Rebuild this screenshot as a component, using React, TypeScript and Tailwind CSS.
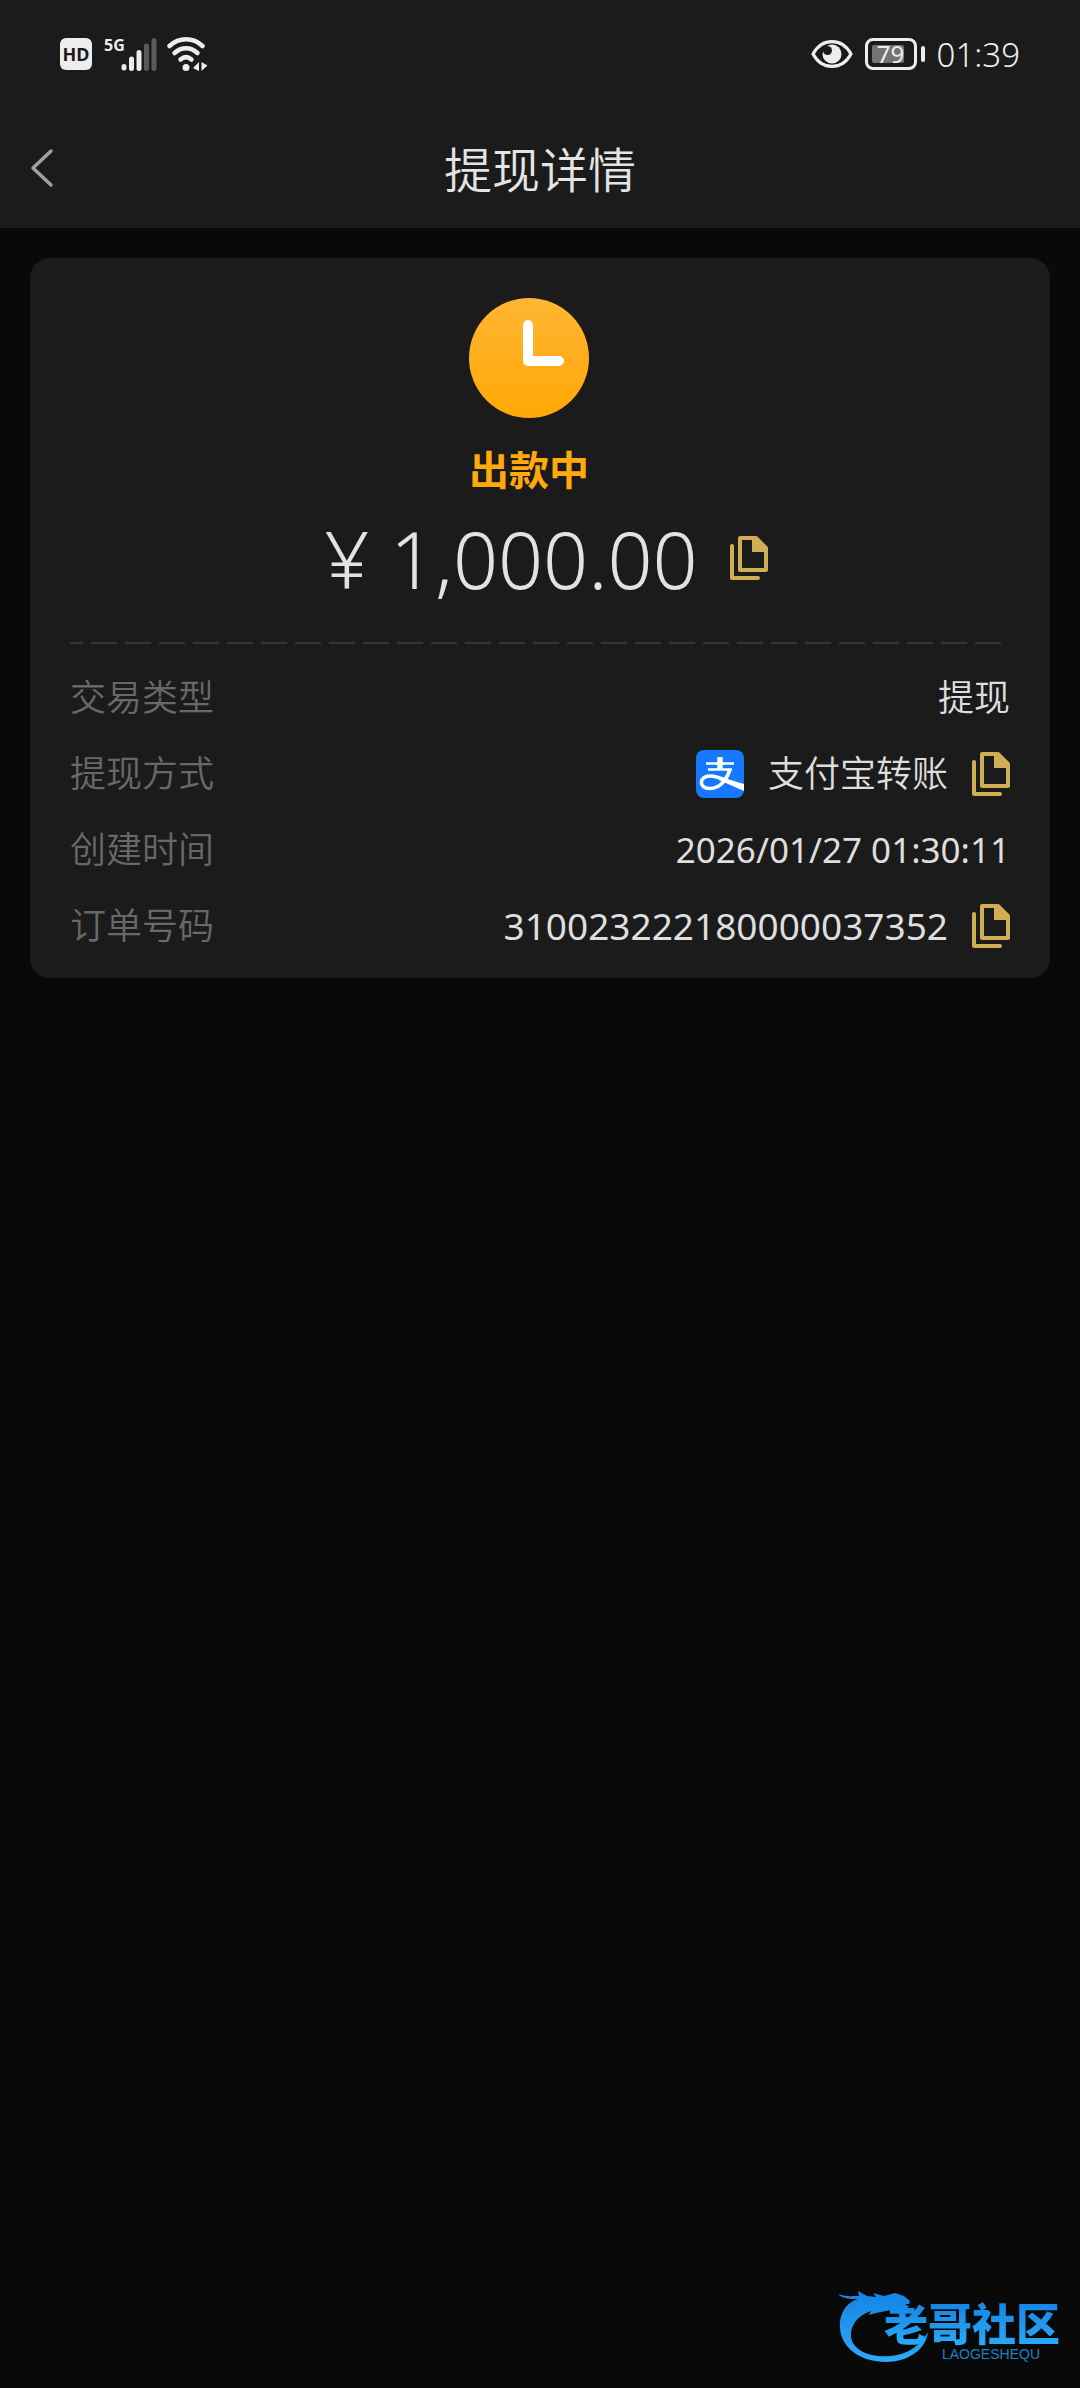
import { useState } from 'react';

interface IDetail {
  label: string;
  value: string;
  valueClass: string;
  copyable?: boolean;
  alipay?: boolean;
}

const details: IDetail[] = [
  { label: '交易类型', value: '提现', valueClass: 'text-4xl font-[350]' },
  { label: '提现方式', value: '支付宝转账', valueClass: 'text-4xl font-[350]', copyable: true, alipay: true },
  { label: '创建时间', value: '2026/01/27 01:30:11', valueClass: 'text-[35px] font-normal' },
  { label: '订单号码', value: '310023222180000037352', valueClass: 'text-[37px] font-normal', copyable: true },
];

function SignalIcon() {
  return (
    <svg width="36" height="35" viewBox="0 0 36 35" strokeWidth="5" strokeLinecap="round" stroke="#ededed">
      <path d="M3 29.5V31M10.5 22V31.5M18 15.5V31.5" />
      <path d="M25.5 9V31.5M33 3.5V31.5" stroke="#5a5a5a" />
    </svg>
  );
}

function WifiIcon() {
  return (
    <svg width="41" height="35" viewBox="0 0 41 35" fill="none" stroke="#ededed" strokeWidth="4.5" strokeLinecap="round">
      <path d="M2.5 9C12 0 26 0 35.5 9" />
      <path d="M7.5 16C14.5 9.5 23.5 9.5 30.5 16" />
      <path d="M13.5 22.5C17 19.5 21 19.5 24.5 22.5" />
      <circle cx="19" cy="30.5" r="3.5" fill="#ededed" stroke="none" />
      <path d="M32 25V34L26 31ZM34.5 25L40.5 28.5L34.5 34Z" fill="#ededed" stroke="none" />
    </svg>
  );
}

function EyeIcon() {
  return (
    <svg width="42" height="30" viewBox="0 0 42 30" fill="none">
      <path d="M2 15C11 -1.5 31 -1.5 40 15C31 31.5 11 31.5 2 15Z" stroke="#ededed" strokeWidth="3.2" strokeLinejoin="round" />
      <circle cx="21" cy="15" r="9.5" fill="#ededed" />
      <circle cx="16.5" cy="11.5" r="4.5" fill="#1b1b1b" />
    </svg>
  );
}

function StatusBar() {
  return (
    <div className="flex h-27 items-center justify-between px-15 text-[#ededed]">
      <div className="flex items-center">
        <span className="flex size-8 items-center justify-center rounded-md bg-[#ededed] text-lg leading-none font-bold text-[#1b1b1b]">
          HD
        </span>
        <span className="ml-3 -mr-1 self-start text-base leading-4 font-bold">5G</span>
        <SignalIcon />
        <span className="ml-2.5">
          <WifiIcon />
        </span>
      </div>
      <div className="flex items-center">
        <EyeIcon />
        <span className="relative ml-3 flex h-8 w-13 items-center justify-center rounded-lg border-3 border-[#ededed] text-2xl leading-none">
          <span className="absolute top-1 left-1 h-[18px] w-8 rounded-xs bg-[#737373]" />
          <span className="relative">79</span>
        </span>
        <span className="ml-1 h-4 w-1 rounded-sm bg-[#ededed]" />
        <span className="ml-3 text-[33px] leading-none font-light">01:39</span>
      </div>
    </div>
  );
}

function AlipayLogo() {
  return (
    <svg width="48" height="48" viewBox="0 0 48 48" className="rounded-lg">
      <rect width="48" height="48" fill="#1677ff" />
      <g fill="none" stroke="#fff">
        <path d="M10 13.5H38M12 19.5H36" strokeWidth="2.6" />
        <path d="M24 7V20" strokeWidth="5.5" />
        <path d="M34 19C31.5 28 25 38.5 14 38.5C2 38.5 3 26 14 26C20 26 26 28.5 32 31" strokeWidth="3.6" />
      </g>
      <path d="M23 26.5L48 34V41L23 30Z" fill="#fff" />
    </svg>
  );
}

function CopyButton({ text }: { text: string }) {
  const [copied, setCopied] = useState(false);

  const onClick = () => {
    navigator.clipboard?.writeText(text);
    setCopied(true);
  };

  return (
    <button type="button" aria-label={copied ? '已复制' : '复制'} className="cursor-pointer" onClick={onClick}>
      <svg width="38" height="44" viewBox="0 0 38 44" fill="none" stroke="#cfae54" strokeWidth="4">
        <path d="M2 10V42H28" strokeLinecap="round" strokeLinejoin="round" />
        <path d="M10 2H26L36 12V34H10Z" strokeLinejoin="round" />
        <path d="M22 1H27L37 11V16H22Z" fill="#cfae54" stroke="none" />
      </svg>
    </button>
  );
}

function DetailRow({ detail }: { detail: IDetail }) {
  return (
    <div className="flex h-19 items-center justify-between">
      <dt className="text-4xl font-[350] text-[#686868]">{detail.label}</dt>
      <dd className="flex items-center gap-6 text-[#dedede]">
        {detail.alipay && <AlipayLogo />}
        <span className={detail.valueClass}>{detail.value}</span>
        {detail.copyable && <CopyButton text={detail.value} />}
      </dd>
    </div>
  );
}

function CommunityMark() {
  return (
    <footer className="relative mr-5 mb-6 h-20 w-[222px] self-end">
      <svg width="222" height="80" viewBox="0 0 222 80" fill="none">
        <defs>
          <linearGradient id="mark" x1="0" y1="0" x2="0" y2="1">
            <stop offset="0" stopColor="#1483e4" />
            <stop offset="1" stopColor="#2cabf8" />
          </linearGradient>
        </defs>
        <path
          d="M0 10C8 13 14 12 21 12L20 7L29 12L38 13L35 9L46 12L57 9L66 12L72 17L71 20L64 20L71 22L68 26L58 25L48 27L38 29L31 31L33 27C18 32 12 43 13 53C15 67 33 74 53 72C70 70 82 62 90 48C88 66 69 78 48 78C23 78 3 64 2 44C1 29 9 18 20 15C13 15 5 15 0 10Z"
          fill="url(#mark)"
        />
      </svg>
      <div className="absolute right-0 bottom-1 flex flex-col items-end">
        <span className="bg-linear-to-b from-[#1483e4] to-[#2cabf8] bg-clip-text text-[44px] leading-12 font-black text-transparent">
          老哥社区
        </span>
        <span className="mr-5 font-['Liberation_Sans',sans-serif] text-sm leading-3 text-[#1e7fc4]">LAOGESHEQU</span>
      </div>
    </footer>
  );
}

export default function App() {
  return (
    <div className="flex min-h-screen flex-col bg-[#090909] font-['Noto_Sans','Noto_Sans_CJK_SC',sans-serif]">
      <header className="bg-[#1b1b1b]">
        <StatusBar />
        <div className="grid h-30 grid-cols-[1fr_auto_1fr] items-center px-7">
          <button type="button" aria-label="返回" className="w-7 cursor-pointer">
            <svg width="28" height="40" viewBox="0 0 28 40" fill="none" stroke="#a0a0a0" strokeWidth="3.5" strokeLinecap="round" strokeLinejoin="round">
              <path d="M23 3L5 20L23 37" />
            </svg>
          </button>
          <h1 className="pt-1 text-5xl font-[350] text-[#e4e4e4]">提现详情</h1>
        </div>
      </header>

      <main className="flex-1 p-[30px]">
        <section className="rounded-[20px] bg-[#1b1b1b] px-10 pt-10">
          <div className="flex flex-col items-center pr-[22px]">
            <svg width="120" height="120" viewBox="0 0 120 120" fill="none">
              <defs>
                <linearGradient id="clock" x1="0" y1="0" x2="0" y2="1">
                  <stop offset="0" stopColor="#ffb533" />
                  <stop offset="1" stopColor="#ffa805" />
                </linearGradient>
              </defs>
              <circle cx="60" cy="60" r="60" fill="url(#clock)" />
              <path d="M59 27V63H90" stroke="#fff" strokeWidth="10" strokeLinecap="round" strokeLinejoin="round" />
            </svg>
            <p className="mt-6 text-[40px] leading-14 font-bold text-[#ffa90f]">出款中</p>
          </div>
          <div className="mt-3 flex h-24 items-center justify-center gap-8 pl-3">
            <p className="text-[79px] leading-none font-light text-[#e2e2e2]">¥ 1,000.00</p>
            <CopyButton text="1000.00" />
          </div>
          <div className="mt-9 mr-2 h-0.5 bg-[repeating-linear-gradient(90deg,#343434_0_13px,transparent_13px_21px,#343434_21px_34px)]" />
          <dl className="mt-4 pb-3.5">
            {details.map(detail => (
              <DetailRow key={detail.label} detail={detail} />
            ))}
          </dl>
        </section>
      </main>

      <CommunityMark />
    </div>
  );
}
